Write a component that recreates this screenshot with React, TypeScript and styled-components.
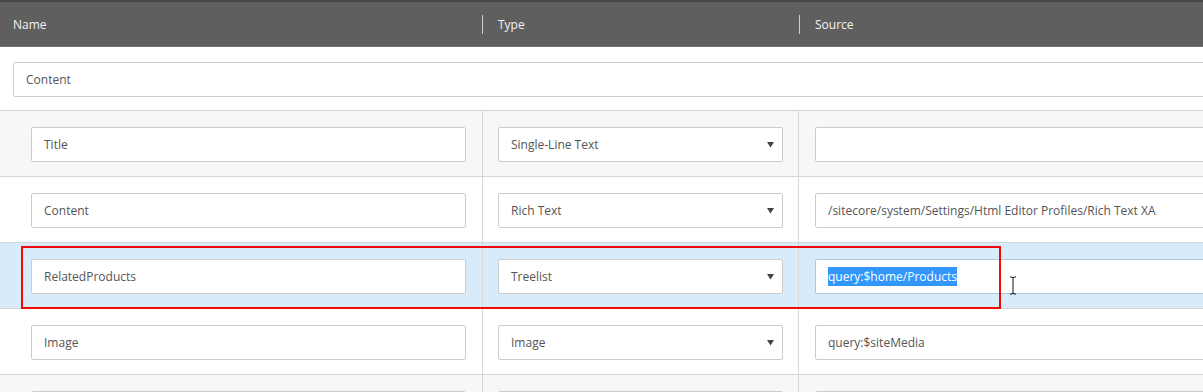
import React from "react";
import styled, { createGlobalStyle } from "styled-components";

const GlobalStyle = createGlobalStyle`
  html, body {
    margin: 0;
    padding: 0;
    background: #ffffff;
    overflow: hidden;
  }
  body {
    font-family: "Open Sans", "Noto Sans", "Liberation Sans", sans-serif;
    -webkit-font-smoothing: antialiased;
  }
`;

const Page = styled.div`
  position: relative;
  width: 1260px;
  height: 392px;
  overflow: hidden;
`;

const Header = styled.div`
  display: grid;
  grid-template-columns: 482px 317px 1fr;
  height: 47px;
  box-sizing: border-box;
  background: #5f5f5f;
  border-top: 2px solid #474747;
  border-bottom: 1px solid #707070;
`;

const HeaderCell = styled.div<{ $divider?: boolean }>`
  position: relative;
  display: flex;
  align-items: center;
  padding-left: ${(p) => (p.$divider ? "16px" : "13px")};
  font-size: 12px;
  color: #f2f2f2;
  &::before {
    content: "";
    display: ${(p) => (p.$divider ? "block" : "none")};
    position: absolute;
    left: 0;
    top: 13px;
    height: 19px;
    width: 1px;
    background: #cfcfcf;
  }
`;

const Section = styled.div`
  padding: 15px 13px 13px;
  border-bottom: 1px solid #d3d3d3;
  background: #ffffff;
`;

const Row = styled.div<{ $bg: string }>`
  display: grid;
  grid-template-columns: 483px 316px 1fr;
  background: ${(p) => p.$bg};
  border-bottom: 1px solid #d6d6d6;
`;

const Cell = styled.div<{ $pl: number; $pr: number; $last?: boolean }>`
  padding: 16px ${(p) => p.$pr}px 14px ${(p) => p.$pl}px;
  border-right: ${(p) => (p.$last ? "none" : "1px solid #d8d8d8")};
`;

const Field = styled.div<{ $focus?: boolean }>`
  height: 35px;
  box-sizing: border-box;
  display: flex;
  align-items: center;
  justify-content: space-between;
  padding: 0 8px 0 12px;
  background: #ffffff;
  border: 1px solid ${(p) => (p.$focus ? "#a8c9e4" : "#cccccc")};
  border-radius: 2px;
  font-size: 12px;
  color: #555555;
  white-space: nowrap;
  overflow: hidden;
`;

const Selected = styled.span`
  background: #3297fd;
  color: #ffffff;
  line-height: 19px;
`;

const Arrow = styled.svg`
  flex: none;
  width: 7px;
  height: 7px;
`;

const Annotation = styled.div`
  position: absolute;
  left: 21px;
  top: 246px;
  width: 980px;
  height: 63px;
  box-sizing: border-box;
  border: 2px solid #f00a0a;
  pointer-events: none;
`;

const Cursor = styled.svg`
  position: absolute;
  left: 1008px;
  top: 276px;
  width: 10px;
  height: 19px;
`;

type RowData = {
  name: string;
  type: string;
  source: string;
  bg: string;
  focus?: boolean;
};

const rows: RowData[] = [
  { name: "Title", type: "Single-Line Text", source: "", bg: "#f7f6f8" },
  {
    name: "Content",
    type: "Rich Text",
    source: "/sitecore/system/Settings/Html Editor Profiles/Rich Text XA",
    bg: "#ffffff",
  },
  {
    name: "RelatedProducts",
    type: "Treelist",
    source: "query:$home/Products",
    bg: "#d7ebfb",
    focus: true,
  },
  { name: "Image", type: "Image", source: "query:$siteMedia", bg: "#ffffff" },
  { name: "", type: "", source: "", bg: "#f7f6f8" },
];

const DownArrow = () => (
  <Arrow viewBox="0 0 7 7">
    <path d="M0 1 L7 1 L3.5 6.5 Z" fill="#444444" />
  </Arrow>
);

export default function App() {
  return (
    <>
      <GlobalStyle />
      <Page>
        <Header>
          <HeaderCell>Name</HeaderCell>
          <HeaderCell $divider>Type</HeaderCell>
          <HeaderCell $divider>Source</HeaderCell>
        </Header>
        <Section>
          <Field>Content</Field>
        </Section>
        {rows.map((r, i) => (
          <Row key={i} $bg={r.bg}>
            <Cell $pl={31} $pr={16}>
              <Field>{r.name}</Field>
            </Cell>
            <Cell $pl={15} $pr={15}>
              <Field>
                <span>{r.type}</span>
                <DownArrow />
              </Field>
            </Cell>
            <Cell $pl={16} $pr={16} $last>
              <Field $focus={r.focus}>
                {r.focus ? <Selected>{r.source}</Selected> : <span>{r.source}</span>}
              </Field>
            </Cell>
          </Row>
        ))}
        <Annotation />
        <Cursor viewBox="0 0 10 19">
          <path
            d="M2 1 H4 L5 2 L6 1 H8 M5 2 V17 M2 18 H4 L5 17 L6 18 H8"
            fill="none"
            stroke="#111111"
            strokeWidth="1"
          />
        </Cursor>
      </Page>
    </>
  );
}
